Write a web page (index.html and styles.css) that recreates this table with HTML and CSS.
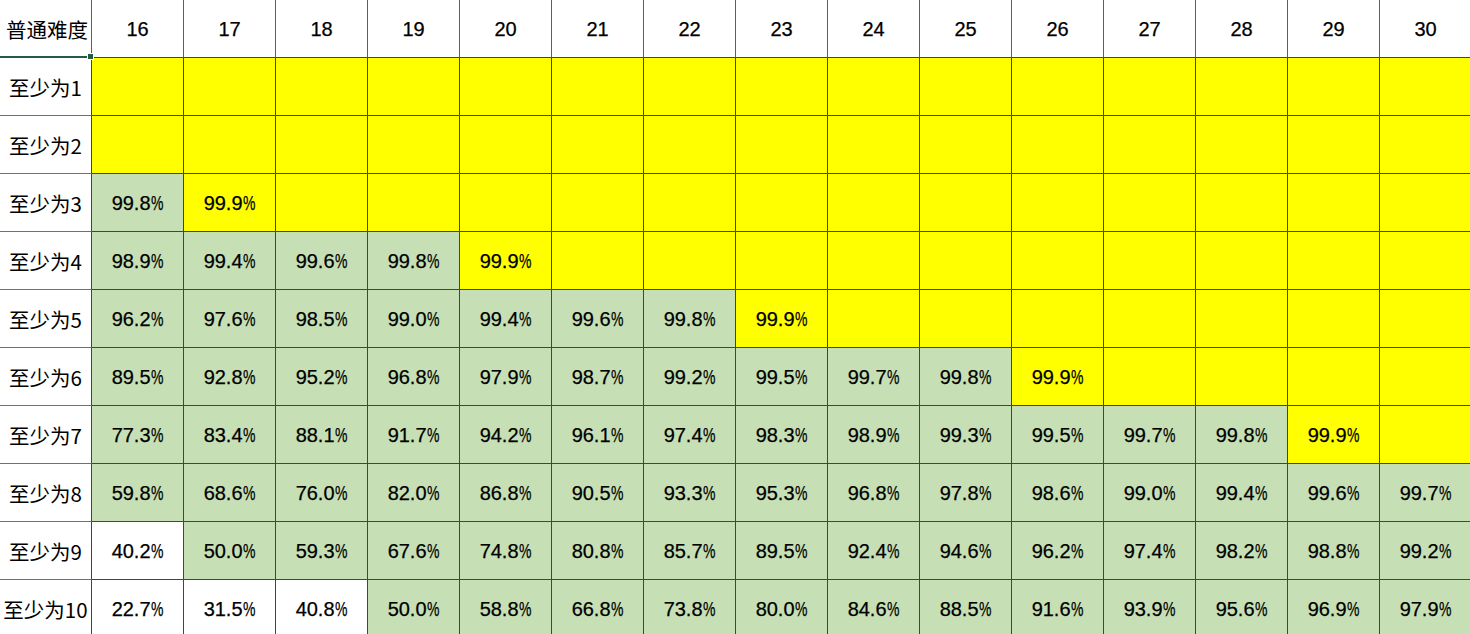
FILE: index.html
```html
<!DOCTYPE html>
<html lang="zh">
<head>
<meta charset="utf-8">
<title>普通难度</title>
<link rel="stylesheet" href="styles.css">
</head>
<body>
<div class="sheet">
  <div class="cell head corner">普通难度</div>
  <div class="cell head">16</div><div class="cell head">17</div><div class="cell head">18</div><div class="cell head">19</div><div class="cell head">20</div><div class="cell head">21</div><div class="cell head">22</div><div class="cell head">23</div><div class="cell head">24</div><div class="cell head">25</div><div class="cell head">26</div><div class="cell head">27</div><div class="cell head">28</div><div class="cell head">29</div><div class="cell head">30</div>

  <div class="cell label">至少为1</div>
  <div class="cell y"></div><div class="cell y"></div><div class="cell y"></div><div class="cell y"></div><div class="cell y"></div><div class="cell y"></div><div class="cell y"></div><div class="cell y"></div><div class="cell y"></div><div class="cell y"></div><div class="cell y"></div><div class="cell y"></div><div class="cell y"></div><div class="cell y"></div><div class="cell y"></div>

  <div class="cell label">至少为2</div>
  <div class="cell y"></div><div class="cell y"></div><div class="cell y"></div><div class="cell y"></div><div class="cell y"></div><div class="cell y"></div><div class="cell y"></div><div class="cell y"></div><div class="cell y"></div><div class="cell y"></div><div class="cell y"></div><div class="cell y"></div><div class="cell y"></div><div class="cell y"></div><div class="cell y"></div>

  <div class="cell label">至少为3</div>
  <div class="cell g">99.8<span class="pct">%</span></div><div class="cell y">99.9<span class="pct">%</span></div><div class="cell y"></div><div class="cell y"></div><div class="cell y"></div><div class="cell y"></div><div class="cell y"></div><div class="cell y"></div><div class="cell y"></div><div class="cell y"></div><div class="cell y"></div><div class="cell y"></div><div class="cell y"></div><div class="cell y"></div><div class="cell y"></div>

  <div class="cell label">至少为4</div>
  <div class="cell g">98.9<span class="pct">%</span></div><div class="cell g">99.4<span class="pct">%</span></div><div class="cell g">99.6<span class="pct">%</span></div><div class="cell g">99.8<span class="pct">%</span></div><div class="cell y">99.9<span class="pct">%</span></div><div class="cell y"></div><div class="cell y"></div><div class="cell y"></div><div class="cell y"></div><div class="cell y"></div><div class="cell y"></div><div class="cell y"></div><div class="cell y"></div><div class="cell y"></div><div class="cell y"></div>

  <div class="cell label">至少为5</div>
  <div class="cell g">96.2<span class="pct">%</span></div><div class="cell g">97.6<span class="pct">%</span></div><div class="cell g">98.5<span class="pct">%</span></div><div class="cell g">99.0<span class="pct">%</span></div><div class="cell g">99.4<span class="pct">%</span></div><div class="cell g">99.6<span class="pct">%</span></div><div class="cell g">99.8<span class="pct">%</span></div><div class="cell y">99.9<span class="pct">%</span></div><div class="cell y"></div><div class="cell y"></div><div class="cell y"></div><div class="cell y"></div><div class="cell y"></div><div class="cell y"></div><div class="cell y"></div>

  <div class="cell label">至少为6</div>
  <div class="cell g">89.5<span class="pct">%</span></div><div class="cell g">92.8<span class="pct">%</span></div><div class="cell g">95.2<span class="pct">%</span></div><div class="cell g">96.8<span class="pct">%</span></div><div class="cell g">97.9<span class="pct">%</span></div><div class="cell g">98.7<span class="pct">%</span></div><div class="cell g">99.2<span class="pct">%</span></div><div class="cell g">99.5<span class="pct">%</span></div><div class="cell g">99.7<span class="pct">%</span></div><div class="cell g">99.8<span class="pct">%</span></div><div class="cell y">99.9<span class="pct">%</span></div><div class="cell y"></div><div class="cell y"></div><div class="cell y"></div><div class="cell y"></div>

  <div class="cell label">至少为7</div>
  <div class="cell g">77.3<span class="pct">%</span></div><div class="cell g">83.4<span class="pct">%</span></div><div class="cell g">88.1<span class="pct">%</span></div><div class="cell g">91.7<span class="pct">%</span></div><div class="cell g">94.2<span class="pct">%</span></div><div class="cell g">96.1<span class="pct">%</span></div><div class="cell g">97.4<span class="pct">%</span></div><div class="cell g">98.3<span class="pct">%</span></div><div class="cell g">98.9<span class="pct">%</span></div><div class="cell g">99.3<span class="pct">%</span></div><div class="cell g">99.5<span class="pct">%</span></div><div class="cell g">99.7<span class="pct">%</span></div><div class="cell g">99.8<span class="pct">%</span></div><div class="cell y">99.9<span class="pct">%</span></div><div class="cell y"></div>

  <div class="cell label">至少为8</div>
  <div class="cell g">59.8<span class="pct">%</span></div><div class="cell g">68.6<span class="pct">%</span></div><div class="cell g">76.0<span class="pct">%</span></div><div class="cell g">82.0<span class="pct">%</span></div><div class="cell g">86.8<span class="pct">%</span></div><div class="cell g">90.5<span class="pct">%</span></div><div class="cell g">93.3<span class="pct">%</span></div><div class="cell g">95.3<span class="pct">%</span></div><div class="cell g">96.8<span class="pct">%</span></div><div class="cell g">97.8<span class="pct">%</span></div><div class="cell g">98.6<span class="pct">%</span></div><div class="cell g">99.0<span class="pct">%</span></div><div class="cell g">99.4<span class="pct">%</span></div><div class="cell g">99.6<span class="pct">%</span></div><div class="cell g">99.7<span class="pct">%</span></div>

  <div class="cell label">至少为9</div>
  <div class="cell w">40.2<span class="pct">%</span></div><div class="cell g">50.0<span class="pct">%</span></div><div class="cell g">59.3<span class="pct">%</span></div><div class="cell g">67.6<span class="pct">%</span></div><div class="cell g">74.8<span class="pct">%</span></div><div class="cell g">80.8<span class="pct">%</span></div><div class="cell g">85.7<span class="pct">%</span></div><div class="cell g">89.5<span class="pct">%</span></div><div class="cell g">92.4<span class="pct">%</span></div><div class="cell g">94.6<span class="pct">%</span></div><div class="cell g">96.2<span class="pct">%</span></div><div class="cell g">97.4<span class="pct">%</span></div><div class="cell g">98.2<span class="pct">%</span></div><div class="cell g">98.8<span class="pct">%</span></div><div class="cell g">99.2<span class="pct">%</span></div>

  <div class="cell label">至少为10</div>
  <div class="cell w">22.7<span class="pct">%</span></div><div class="cell w">31.5<span class="pct">%</span></div><div class="cell w">40.8<span class="pct">%</span></div><div class="cell g">50.0<span class="pct">%</span></div><div class="cell g">58.8<span class="pct">%</span></div><div class="cell g">66.8<span class="pct">%</span></div><div class="cell g">73.8<span class="pct">%</span></div><div class="cell g">80.0<span class="pct">%</span></div><div class="cell g">84.6<span class="pct">%</span></div><div class="cell g">88.5<span class="pct">%</span></div><div class="cell g">91.6<span class="pct">%</span></div><div class="cell g">93.9<span class="pct">%</span></div><div class="cell g">95.6<span class="pct">%</span></div><div class="cell g">96.9<span class="pct">%</span></div><div class="cell g">97.9<span class="pct">%</span></div>
</div>
</body>
</html>
```

FILE: styles.css
```css
html, body {
  margin: 0;
  padding: 0;
  background: #ffffff;
  overflow: hidden;
}

.sheet {
  display: grid;
  grid-template-columns: repeat(16, 92px);
  grid-auto-rows: 58px;
  width: 1472px;
  font-family: "Liberation Sans", Arial, "Noto Sans CJK SC", sans-serif;
  color: #000000;
}

.cell {
  box-sizing: border-box;
  border-right: 1px solid #45453d;
  border-bottom: 1px solid #45453d;
  display: flex;
  align-items: center;
  justify-content: center;
  font-size: 20px;
  white-space: nowrap;
  background: #ffffff;
  padding-top: 1px;
  -webkit-text-stroke: 0.25px #000000;
}

.head {
  font-size: 20px;
  border-right-color: #5e5e5e;
}

.corner {
  position: relative;
  font-family: "Noto Sans CJK SC", "Liberation Sans", sans-serif;
  font-size: 20.5px;
  border-bottom: 2px solid #245b45;
  justify-content: flex-end;
  padding-right: 3px;
  -webkit-text-stroke: 0;
}

.corner::after {
  content: "";
  position: absolute;
  right: -3px;
  bottom: -4px;
  width: 5px;
  height: 5px;
  background: #245b45;
  border: 1px solid #ffffff;
}

.label {
  font-family: "Noto Sans CJK SC", "Liberation Sans", sans-serif;
  font-size: 20.5px;
  border-bottom-color: #707070;
  -webkit-text-stroke: 0;
}

.y {
  background: #ffff00;
}

.g {
  background: #c6dfb5;
}

.w {
  background: #ffffff;
}

.pct {
  display: inline-block;
  transform: scaleX(0.7);
  transform-origin: left center;
  margin-right: -5px;
}
```
